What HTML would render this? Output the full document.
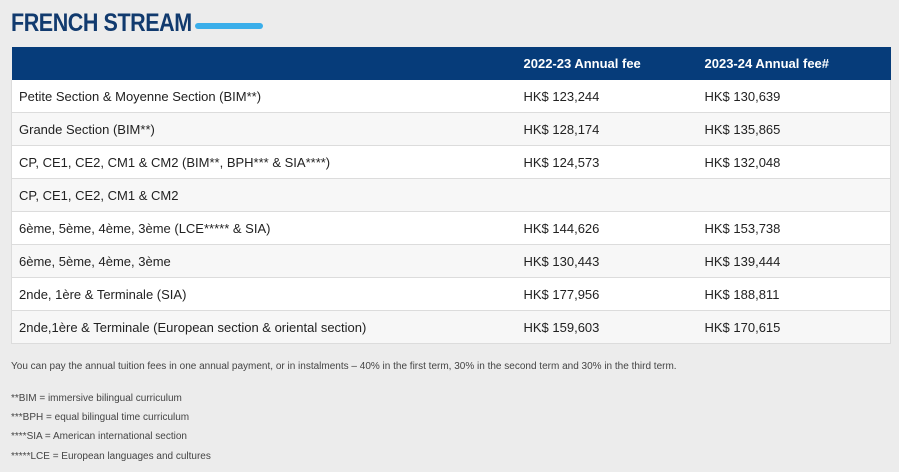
<!DOCTYPE html>
<html><head><meta charset="utf-8"><style>
body{margin:0;width:899px;height:472px;background:#ececec;font-family:"Liberation Sans",sans-serif;overflow:hidden;position:relative}
h1{position:absolute;left:11px;top:9px;margin:0;font-size:25px;font-weight:bold;color:#113a6e;letter-spacing:-0.5px;transform:scaleX(0.86);transform-origin:left}
.bar{position:absolute;left:195px;top:23px;width:68px;height:6px;border-radius:3px;background:#3aaeea}
table{position:absolute;left:11px;top:47px;width:880px;border-collapse:collapse;font-size:13px;color:#222}
td,th{height:32px;padding:0 0 0 7px;text-align:left;border-bottom:1px solid #dcdcdc}
th{background:#063c7a;color:#fff;font-weight:bold;height:33px;border:none}
tr:nth-child(odd) td{background:#f7f7f7}tr:nth-child(even) td{background:#fff}
td:first-child{border-left:1px solid #dcdcdc}td:last-child{border-right:1px solid #dcdcdc}
.c1{width:498px}.c2{width:174px}
.n{position:absolute;left:11px;font-size:10px;color:#444}
</style></head><body>
<h1>FRENCH STREAM</h1><div class="bar"></div>
<table>
<tr><th class="c1"></th><th class="c2">2022-23 Annual fee</th><th>2023-24 Annual fee#</th></tr>
<tr><td>Petite Section &amp; Moyenne Section (BIM**)</td><td>HK$ 123,244</td><td>HK$ 130,639</td></tr>
<tr><td>Grande Section (BIM**)</td><td>HK$ 128,174</td><td>HK$ 135,865</td></tr>
<tr><td>CP, CE1, CE2, CM1 &amp; CM2 (BIM**, BPH*** &amp; SIA****)</td><td>HK$ 124,573</td><td>HK$ 132,048</td></tr>
<tr><td>CP, CE1, CE2, CM1 &amp; CM2</td><td></td><td></td></tr>
<tr><td>6ème, 5ème, 4ème, 3ème (LCE***** &amp; SIA)</td><td>HK$ 144,626</td><td>HK$ 153,738</td></tr>
<tr><td>6ème, 5ème, 4ème, 3ème</td><td>HK$ 130,443</td><td>HK$ 139,444</td></tr>
<tr><td>2nde, 1ère &amp; Terminale (SIA)</td><td>HK$ 177,956</td><td>HK$ 188,811</td></tr>
<tr><td>2nde,1ère &amp; Terminale (European section &amp; oriental section)</td><td>HK$ 159,603</td><td>HK$ 170,615</td></tr>
</table>
<div class="n" style="top:361px">You can pay the annual tuition fees in one annual payment, or in instalments – 40% in the first term, 30% in the second term and 30% in the third term.</div>
<div class="n" style="top:393px">**BIM = immersive bilingual curriculum</div>
<div class="n" style="top:412px">***BPH = equal bilingual time curriculum</div>
<div class="n" style="top:431px">****SIA = American international section</div>
<div class="n" style="top:451px">*****LCE = European languages and cultures</div>
</body></html>
